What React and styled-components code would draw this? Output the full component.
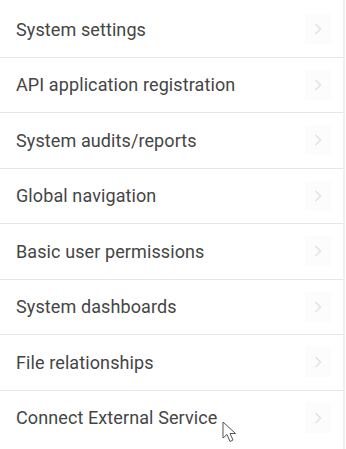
import React from 'react';
import styled, { createGlobalStyle } from 'styled-components';

const GlobalStyle = createGlobalStyle`
  html, body {
    margin: 0;
    padding: 0;
    background: #ffffff;
  }
  body {
    font-family: Roboto, "Liberation Sans", sans-serif;
  }
`;

const Panel = styled.nav`
  position: relative;
  width: 345px;
  padding-top: 2px;
  border-right: 2px solid #efefef;
  min-height: 449px;
  box-sizing: border-box;
`;

const List = styled.ul`
  list-style: none;
  margin: 0;
  padding: 0;
`;

const Row = styled.li`
  display: flex;
  align-items: center;
  justify-content: space-between;
  height: 54.5px;
  padding: 0 10px 0 16px;
  border-bottom: ${({ $last }) => ($last ? 'none' : '1px solid #e6e6e6')};
  color: #454545;
  font-size: 18px;
  cursor: pointer;
`;

const Label = styled.span`
  letter-spacing: 0.1px;
`;

const ChevronBox = styled.span`
  display: flex;
  align-items: center;
  justify-content: center;
  width: 26px;
  height: 30px;
  margin-right: 2px;
  background: #fcfcfc;
`;

const Pointer = styled.svg`
  position: absolute;
  left: 222px;
  top: 421px;
  pointer-events: none;
`;

const items = [
  'System settings',
  'API application registration',
  'System audits/reports',
  'Global navigation',
  'Basic user permissions',
  'System dashboards',
  'File relationships',
  'Connect External Service',
];

function Chevron() {
  return (
    <ChevronBox>
      <svg width="8" height="12" viewBox="0 0 8 12">
        <path d="M1.5 1 L6.5 6 L1.5 11" fill="none" stroke="#e2e2e2" strokeWidth="1.5" />
      </svg>
    </ChevronBox>
  );
}

export default function App() {
  return (
    <>
      <GlobalStyle />
      <Panel>
        <List>
          {items.map((label, i) => (
            <Row key={label} $last={i === items.length - 1}>
              <Label>{label}</Label>
              <Chevron />
            </Row>
          ))}
        </List>
        <Pointer width="18" height="24" viewBox="0 0 18 24">
          <path
            d="M1 1 L1 17 L5 13.5 L8 20.5 L11 19 L8 12.5 L13.5 12.5 Z"
            fill="#ffffff"
            stroke="#555"
            strokeWidth="1"
            strokeLinejoin="round"
          />
        </Pointer>
      </Panel>
    </>
  );
}
